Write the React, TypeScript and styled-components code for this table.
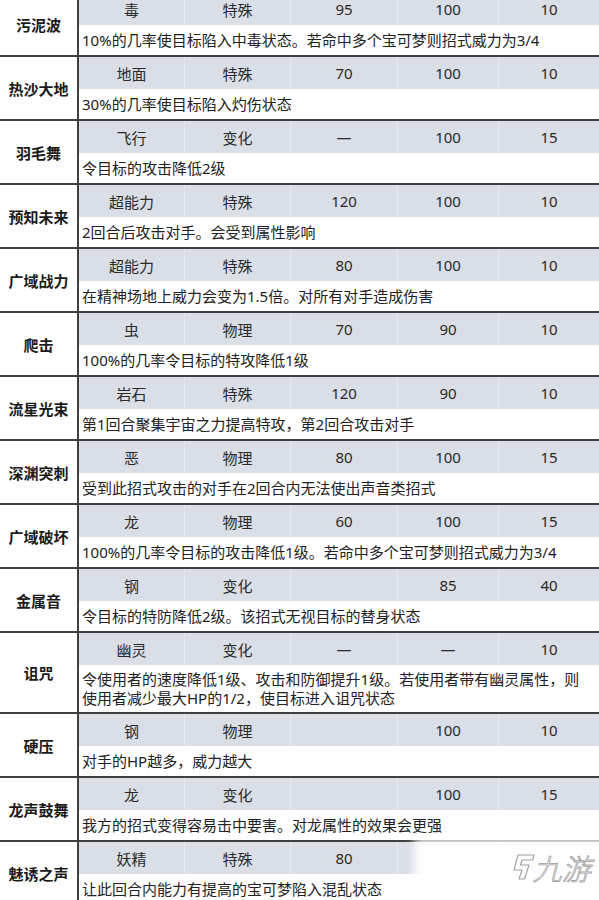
import React from "react";
import styled, { createGlobalStyle } from "styled-components";

const GlobalStyle = createGlobalStyle`
  html, body { margin: 0; padding: 0; background: #ffffff; }
  body { overflow: hidden; }
  * { box-sizing: border-box; }
`;

const Page = styled.div`
  position: relative;
  width: 599px;
  height: 900px;
  overflow: hidden;
  background: #ffffff;
  font-family: "Noto Sans", "Noto Sans CJK SC", sans-serif;
  color: #222;
`;

const Table = styled.div`
  display: flex;
  flex-direction: column;
  margin-top: -7px;
`;

const Entry = styled.div`
  display: grid;
  grid-template-columns: 79px 1fr;
  border-bottom: 2px solid #3f3f3f;
`;

const NameCell = styled.div`
  display: flex;
  align-items: center;
  justify-content: center;
  border-right: 2px solid #3f3f3f;
  font-family: "Noto Sans CJK SC", sans-serif;
  font-weight: 700;
  font-size: 15px;
  color: #1a1a1a;
  white-space: nowrap;
`;

const Body = styled.div`
  display: flex;
  flex-direction: column;
`;

const StatsRow = styled.div`
  display: grid;
  grid-template-columns: 106px 106px 107px 101px 1fr;
  height: 32px;
  background: #d9dee7;
`;

const StatCell = styled.div`
  display: flex;
  align-items: center;
  justify-content: center;
  font-size: 15px;
  color: #2a2a2a;
  border-right: 1px solid rgba(255, 255, 255, 0.35);
  &:last-child { border-right: none; }
`;

const DescRow = styled.div<{ $tall?: boolean }>`
  display: flex;
  flex-direction: column;
  justify-content: center;
  height: ${(p) => (p.$tall ? "47px" : "30px")};
  padding: 0 3px;
  font-size: 15px;
  line-height: 19px;
  color: #222;
  white-space: nowrap;
`;

const DescLine = styled.span`
  display: block;
  height: 19px;
`;

const Watermark = styled.div`
  position: absolute;
  left: 414px;
  top: 838px;
  width: 210px;
  height: 80px;
  background: rgba(255, 255, 255, 0.97);
  filter: blur(5px);
`;

const Logo = styled.div`
  position: absolute;
  left: 511px;
  top: 851px;
  display: flex;
  align-items: center;
  gap: 1px;
`;

const LogoText = styled.span`
  display: inline-block;
  font-family: "Noto Sans CJK SC", sans-serif;
  font-size: 29px;
  font-weight: 300;
  transform: skewX(-14deg);
  color: #ffffff;
  -webkit-text-stroke: 0.8px #9e9e9e;
  letter-spacing: 0px;
  line-height: 32px;
`;

type Move = {
  name: string;
  type: string;
  cat: string;
  power: string;
  acc: string;
  pp: string;
  desc: string[];
};

const moves: Move[] = [
  { name: "污泥波", type: "毒", cat: "特殊", power: "95", acc: "100", pp: "10", desc: ["10%的几率使目标陷入中毒状态。若命中多个宝可梦则招式威力为3/4"] },
  { name: "热沙大地", type: "地面", cat: "特殊", power: "70", acc: "100", pp: "10", desc: ["30%的几率使目标陷入灼伤状态"] },
  { name: "羽毛舞", type: "飞行", cat: "变化", power: "—", acc: "100", pp: "15", desc: ["令目标的攻击降低2级"] },
  { name: "预知未来", type: "超能力", cat: "特殊", power: "120", acc: "100", pp: "10", desc: ["2回合后攻击对手。会受到属性影响"] },
  { name: "广域战力", type: "超能力", cat: "特殊", power: "80", acc: "100", pp: "10", desc: ["在精神场地上威力会变为1.5倍。对所有对手造成伤害"] },
  { name: "爬击", type: "虫", cat: "物理", power: "70", acc: "90", pp: "10", desc: ["100%的几率令目标的特攻降低1级"] },
  { name: "流星光束", type: "岩石", cat: "特殊", power: "120", acc: "90", pp: "10", desc: ["第1回合聚集宇宙之力提高特攻，第2回合攻击对手"] },
  { name: "深渊突刺", type: "恶", cat: "物理", power: "80", acc: "100", pp: "15", desc: ["受到此招式攻击的对手在2回合内无法使出声音类招式"] },
  { name: "广域破坏", type: "龙", cat: "物理", power: "60", acc: "100", pp: "15", desc: ["100%的几率令目标的攻击降低1级。若命中多个宝可梦则招式威力为3/4"] },
  { name: "金属音", type: "钢", cat: "变化", power: "", acc: "85", pp: "40", desc: ["令目标的特防降低2级。该招式无视目标的替身状态"] },
  { name: "诅咒", type: "幽灵", cat: "变化", power: "—", acc: "—", pp: "10", desc: ["令使用者的速度降低1级、攻击和防御提升1级。若使用者带有幽灵属性，则", "使用者减少最大HP的1/2，使目标进入诅咒状态"] },
  { name: "硬压", type: "钢", cat: "物理", power: "", acc: "100", pp: "10", desc: ["对手的HP越多，威力越大"] },
  { name: "龙声鼓舞", type: "龙", cat: "变化", power: "", acc: "100", pp: "15", desc: ["我方的招式变得容易击中要害。对龙属性的效果会更强"] },
  { name: "魅诱之声", type: "妖精", cat: "特殊", power: "80", acc: "", pp: "", desc: ["让此回合内能力有提高的宝可梦陷入混乱状态"] },
];

function LogoMark() {
  return (
    <svg width="24" height="30" viewBox="0 0 24 30" fill="none" stroke="#9e9e9e" strokeWidth="1.1" strokeLinejoin="round">
      <path d="M7 3 L23 3 L21.5 8 L11 8 L9.5 13 L18 13 L13.5 27 L8 27 L11 18 L3 18 Z" />
    </svg>
  );
}

export default function App() {
  return (
    <Page>
      <GlobalStyle />
      <Table>
        {moves.map((m) => (
          <Entry key={m.name}>
            <NameCell>{m.name}</NameCell>
            <Body>
              <StatsRow>
                <StatCell>{m.type}</StatCell>
                <StatCell>{m.cat}</StatCell>
                <StatCell>{m.power}</StatCell>
                <StatCell>{m.acc}</StatCell>
                <StatCell>{m.pp}</StatCell>
              </StatsRow>
              <DescRow $tall={m.desc.length > 1}>
                {m.desc.map((line) => (
                  <DescLine key={line}>{line}</DescLine>
                ))}
              </DescRow>
            </Body>
          </Entry>
        ))}
      </Table>
      <Watermark />
      <Logo>
        <LogoMark />
        <LogoText>九游</LogoText>
      </Logo>
    </Page>
  );
}
